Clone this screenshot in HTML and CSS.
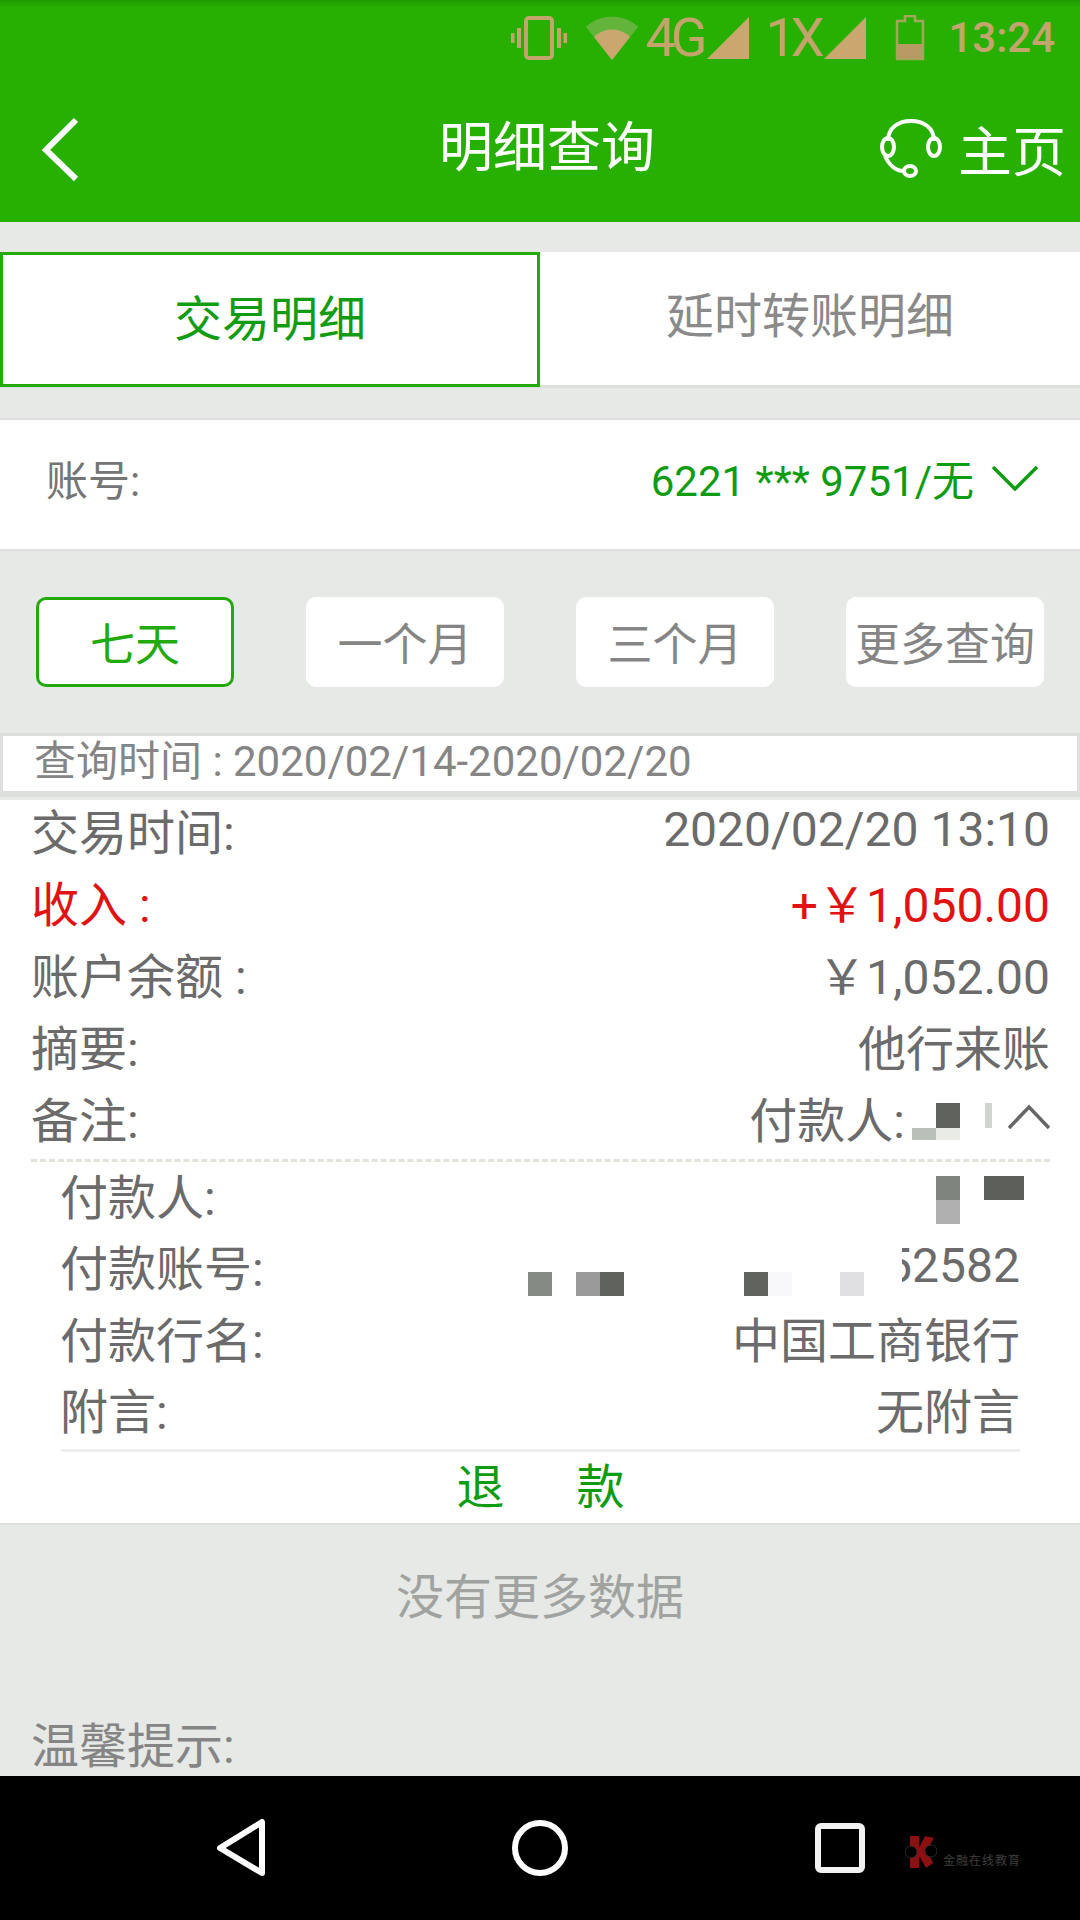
FILE: index.html
```html
<!DOCTYPE html>
<html lang="zh-CN">
<head>
<meta charset="utf-8">
<title>明细查询</title>
<link rel="stylesheet" href="styles.css">
</head>
<body>
<div class="screen">
  <header class="appbar">
    <div class="statusbar">
      <svg class="st-vibrate" width="56" height="44" viewBox="0 0 56 44" fill="none" stroke="#c3a46c" stroke-width="4"><rect x="15" y="2" width="26" height="40" rx="3"/><path d="M8 12v20M1.500 17v10M48 12v20M54.500 17v10"/></svg>
      <svg class="st-wifi" width="52" height="44" viewBox="0 0 52 44"><path d="M0 11C14-3 38-3 52 11L26 44Z" fill="#62b53a"/><path d="M8 21C18 11 34 11 44 21L26 44Z" fill="#c9a76e"/></svg>
      <span class="st-net st-4g">4G</span>
      <svg class="st-signal" width="42" height="42" viewBox="0 0 42 42"><path d="M42 0V42H0Z" fill="#c9a76e"/></svg>
      <span class="st-net st-1x">1X</span>
      <svg class="st-signal st-signal2" width="42" height="42" viewBox="0 0 42 42"><path d="M42 0V42H0Z" fill="#c9a76e"/></svg>
      <svg class="st-battery" width="30" height="46" viewBox="0 0 30 46" fill="none"><path d="M10 1h10v5h8v38H2V6h8Z" stroke="#a6a65a" stroke-width="2.500"/><rect x="3" y="29" width="24" height="14" fill="#b89a63"/></svg>
      <span class="st-time">13:24</span>
    </div>
    <div class="titlebar">
      <svg class="back" width="60" height="64" viewBox="0 0 60 64" fill="none" stroke="#fff" stroke-width="6"><path d="M44 3L14 33L44 62"/></svg>
      <h1 class="title">明细查询</h1>
      <div class="home">
        <svg width="62" height="60" viewBox="0 0 62 60" fill="none" stroke="#fff" stroke-width="4"><path d="M8 22C8 8 19 2 31 2C43 2 54 8 54 22"/><ellipse cx="8" cy="28" rx="6" ry="9"/><ellipse cx="54" cy="28" rx="6" ry="9"/><path d="M5 37C9 46 16 52 24 52"/><ellipse cx="30" cy="52" rx="6" ry="5"/></svg>
        <span>主页</span>
      </div>
    </div>
  </header>

  <main class="content">
    <div class="tabs">
      <div class="tab tab-active">交易明细</div>
      <div class="tab">延时转账明细</div>
    </div>

    <div class="account">
      <span class="account-label">账号:</span>
      <span class="account-value">6221 *** 9751/无
        <svg width="46" height="26" viewBox="0 0 46 26" fill="none" stroke="#109c12" stroke-width="3.500"><path d="M1 2L23 24L45 2"/></svg>
      </span>
    </div>

    <div class="ranges">
      <div class="range range-active">七天</div>
      <div class="range">一个月</div>
      <div class="range">三个月</div>
      <div class="range">更多查询</div>
    </div>

    <div class="query">查询时间 : 2020/02/14-2020/02/20</div>

    <section class="details">
      <div class="row"><span>交易时间:</span><span>2020/02/20 13:10</span></div>
      <div class="row row-income"><span>收入 :</span><span>+￥1,050.00</span></div>
      <div class="row"><span>账户余额 :</span><span>￥1,052.00</span></div>
      <div class="row"><span>摘要:</span><span>他行来账</span></div>
      <div class="row row-note">
        <span>备注:</span>
        <span class="note-value">付款人:
          <svg width="42" height="26" viewBox="0 0 42 26" fill="none" stroke="#666" stroke-width="3.500"><path d="M1 24L21 3L41 24"/></svg>
        </span>
      </div>
      <div class="sub">
        <div class="row"><span>付款人:</span><span></span></div>
        <div class="row"><span>付款账号:</span><span>52582</span></div>
        <div class="row"><span>付款行名:</span><span>中国工商银行</span></div>
        <div class="row"><span>附言:</span><span>无附言</span></div>
      </div>
      <div class="refund"><span>退</span><span>款</span></div>

      <i class="mosaic m1"></i><i class="mosaic m2"></i><i class="mosaic m3"></i><i class="mosaic m4"></i>
      <i class="mosaic m5"></i><i class="mosaic m6"></i><i class="mosaic m7"></i>
      <i class="mosaic m8"></i><i class="mosaic m9"></i><i class="mosaic m10"></i><i class="mosaic m11"></i><i class="mosaic m12"></i><i class="mosaic m13"></i><i class="mosaic m14"></i>
    </section>

    <div class="nomore">没有更多数据</div>
    <div class="tips">温馨提示:</div>
  </main>

  <nav class="navbar">
    <svg width="52" height="60" viewBox="0 0 52 60" fill="none" stroke="#fff" stroke-width="6" stroke-linejoin="round"><path d="M47 4V55L5 30Z"/></svg>
    <svg width="56" height="56" viewBox="0 0 56 56" fill="none" stroke="#fff" stroke-width="6"><circle cx="28" cy="28" r="25"/></svg>
    <svg class="nav-square" width="50" height="50" viewBox="0 0 50 50" fill="none" stroke="#f2f2f2" stroke-width="6"><rect x="3" y="3" width="44" height="44" rx="3"/></svg>
    <div class="watermark">
      <svg width="32" height="32" viewBox="0 0 32 32"><path d="M5 0H14V32H5ZM20 0L29 2L22 14L28 27L21 32L12 16Z" fill="#8c0f12"/><circle cx="6" cy="16" r="6" fill="#000" stroke="#2c2c2c"/><circle cx="26" cy="15" r="6" fill="#000" stroke="#2c2c2c"/></svg>
      <span>金融在线教育</span>
    </div>
  </nav>
</div>
</body>
</html>
```

FILE: styles.css
```css
* { box-sizing: border-box; }
html, body { margin: 0; padding: 0; }
body {
  width: 1080px;
  height: 1920px;
  overflow: hidden;
  font-family: Roboto, "Noto Sans CJK SC", sans-serif;
  background: #e6e9e6;
}
.screen { display: flex; flex-direction: column; height: 1920px; }

/* App bar */
.appbar {
  height: 222px;
  flex: none;
  background: linear-gradient(#1f9a02 0, #27b002 8px);
}
.statusbar {
  height: 75px;
  display: flex;
  align-items: center;
  padding-right: 25px;
  color: #c3a46c;
}
.statusbar svg, .statusbar span { flex: none; }
.st-vibrate { margin-left: auto; }
.st-wifi { margin-left: 19px; }
.st-net { font-size: 54px; font-weight: 400; letter-spacing: -5px; line-height: 44px; }
.st-4g { margin-left: 7px; width: 56px; }
.st-signal { margin-left: 6px; }
.st-1x { margin-left: 16px; width: 46px; }
.st-signal2 { margin-left: 13px; }
.st-battery { margin-left: 29px; }
.st-time { margin-left: 23px; font-size: 42px; font-weight: 500; line-height: 44px; }

.titlebar {
  height: 147px;
  display: grid;
  grid-template-columns: 1fr auto 1fr;
  align-items: center;
  padding: 0 18px 0 32px;
  color: #fff;
}
.back { display: block; }
.title { margin: 0; font-size: 54px; font-weight: 400; line-height: 60px; }
.home { display: flex; align-items: center; justify-content: flex-end; gap: 16px; margin-right: -4px; font-size: 54px; }

/* Content */
.content { flex: 1; min-height: 0; overflow: hidden; padding-top: 30px; color: #757575; }

.tabs {
  display: grid;
  grid-template-columns: 540px 1fr;
  height: 136px;
  background: #fff;
  border-bottom: 3px solid #dcdfdc;
}
.tab {
  display: flex;
  align-items: center;
  justify-content: center;
  font-size: 48px;
  color: #8a8a8a;
  padding-bottom: 16px;
}
.tab-active {
  height: 135px;
  border: 3px solid #22aa0a;
  color: #119c12;
  padding: 0 0 10px;
}

.account {
  margin-top: 30px;
  height: 133px;
  display: flex;
  align-items: center;
  justify-content: space-between;
  padding: 0 42px 14px 46px;
  background: #fff;
  border-top: 2px solid #dcdfdc;
  border-bottom: 2px solid #dcdfdc;
  font-size: 42px;
}
.account-value { display: flex; align-items: center; gap: 18px; color: #109c12; }

.ranges {
  margin-top: 46px;
  display: flex;
  justify-content: space-between;
  padding: 0 36px;
}
.range {
  width: 198px;
  height: 90px;
  display: flex;
  align-items: center;
  justify-content: center;
  background: #fff;
  border-radius: 10px;
  font-size: 45px;
  padding-bottom: 2px;
  color: #858585;
}
.range-active { border: 3px solid #22aa0a; color: #22aa0a; }

.query {
  margin-top: 46px;
  height: 64px;
  padding-left: 31px;
  background: #fff;
  border: solid #dcdfdc;
  border-width: 3px 3px 6px;
  font-size: 42px;
  line-height: 52px;
  color: #858585;
}

.details { position: relative; margin-top: 3px; padding: 0 30px 0 31px; background: #fff; height: 725px; border-bottom: 2px solid #dcdfdc; }
.row {
  height: 72px;
  display: flex;
  align-items: center;
  justify-content: space-between;
  padding-bottom: 14px;
  font-size: 48px;
  color: #6b6b6b;
}
.row-income { color: #e21212; }
.note-value { display: flex; align-items: center; gap: 103px; }
.sub { margin-top: -1px; padding: 3px 30px 0 29px; border-top: 3px dashed #e2e4dc; }
.sub .row { height: 71.500px; }
.refund {
  margin: -2px 30px 0;
  border-top: 3px solid #eeeeee;
  height: 72px;
  display: flex;
  align-items: center;
  justify-content: center;
  gap: 72px;
  padding-bottom: 8px;
  font-size: 48px;
  color: #109c12;
}
.mosaic { position: absolute; display: block; width: 24px; height: 24px; }
.m1 { left: 936px; top: 303px; height: 25px; background: #5f625c; }
.m2 { left: 936px; top: 328px; height: 12px; background: #e8ebe6; }
.m3 { left: 912px; top: 328px; height: 12px; background: #b9c0ba; }
.m4 { left: 985px; top: 303px; width: 7px; height: 25px; background: #d0d3ce; }
.m5 { left: 936px; top: 376px; background: #80847e; }
.m6 { left: 936px; top: 400px; background: #b0b0b0; }
.m7 { left: 984px; top: 376px; width: 40px; background: #5c5f5a; }
.m8 { left: 528px; top: 472px; background: #858a84; }
.m9 { left: 576px; top: 472px; background: #9a9a9a; }
.m10 { left: 600px; top: 472px; background: #5f635c; }
.m11 { left: 744px; top: 472px; background: #60635e; }
.m12 { left: 768px; top: 472px; background: #f8f8fa; }
.m13 { left: 840px; top: 472px; background: #e0e0e2; }
.m14 { left: 864px; top: 445px; width: 38px; height: 50px; background: #fff; }

.nomore { margin-top: 41px; text-align: center; font-size: 48px; line-height: 64px; color: #a0a3a0; }
.tips { margin-top: 85px; padding-left: 31px; font-size: 48px; line-height: 64px; color: #858585; }

/* Nav bar */
.navbar {
  position: relative;
  height: 144px;
  flex: none;
  background: #000;
  display: flex;
  align-items: center;
  padding-left: 215px;
  gap: 245px;
}
.nav-square { margin-left: 2px; }
.watermark {
  position: absolute;
  left: 905px;
  top: 60px;
  display: flex;
  align-items: flex-end;
  gap: 6px;
  font-size: 12px;
  letter-spacing: 1px;
  color: #3e3e3e;
}
```
